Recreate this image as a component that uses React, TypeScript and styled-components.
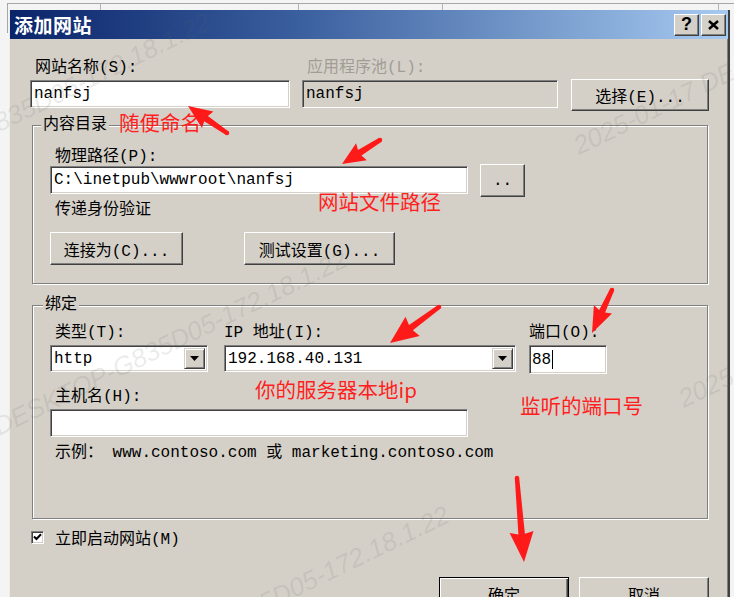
import React from "react";
import styled, { createGlobalStyle } from "styled-components";

const FACE = "#d4d0c8";
const UI_FONT = `"Liberation Mono", "Noto Sans CJK SC", monospace`;
const NOTE_FONT = `"Noto Sans CJK SC", "Noto Sans", sans-serif`;

const GlobalStyle = createGlobalStyle`
  html, body { margin: 0; padding: 0; }
  body { background: #f4f4f4; font-family: ${UI_FONT}; }
`;

const Page = styled.div`
  position: relative;
  width: 734px;
  height: 597px;
  overflow: hidden;
  background: #f4f4f4;
`;

/* list view header of the window behind the dialog */
const BackHeader = styled.div`
  position: absolute;
  left: 7px;
  top: 3px;
  width: 727px;
  height: 29px;
  border-top: 1px solid #a6a6a6;
  border-left: 1px solid #a6a6a6;
  display: flex;
`;

const BackCell = styled.div<{ $w: number }>`
  width: ${(p) => p.$w}px;
  height: 6px;
  border-right: 1px solid #b4b4b4;
  flex: none;
`;

const Dialog = styled.div`
  position: absolute;
  left: 9px;
  top: 10px;
  width: 721px;
  height: 640px;
  box-sizing: border-box;
  background: ${FACE};
  border-left: 1px solid #eeece6;
  border-right: 2px solid #404040;
  box-shadow: inset -1px 0 0 #808080;
  display: flex;
  flex-direction: column;
`;

const TitleBar = styled.div`
  height: 29px;
  flex: none;
  background: linear-gradient(90deg, #0a246a 0%, #3a5f9e 40%, #a6caf0 100%);
  display: flex;
  align-items: center;
  padding: 0 2px 0 4px;
`;

const TitleText = styled.div`
  flex: 1;
  color: #fff;
  font: bold 19px ${NOTE_FONT};
  line-height: 29px;
  letter-spacing: 0.5px;
`;

const TitleButtons = styled.div`
  display: flex;
  gap: 2px;
`;

const CaptionButton = styled.div`
  box-sizing: border-box;
  width: 25px;
  height: 22px;
  background: ${FACE};
  border: 1px solid;
  border-color: #fff #404040 #404040 #fff;
  box-shadow: inset -1px -1px 0 #808080;
  display: flex;
  align-items: center;
  justify-content: center;
  font: bold 18px "Liberation Sans", sans-serif;
  color: #000;
`;

const Body = styled.div`
  padding: 19px 19px 0 20px;
  display: flex;
  flex-direction: column;
`;

const TopGrid = styled.div`
  display: grid;
  grid-template-columns: 260px 256px 1fr;
  column-gap: 12px;
  row-gap: 2px;
`;

const Label = styled.div<{ $indent?: number; $disabled?: boolean; $mt?: number }>`
  font-size: 16px;
  line-height: 20px;
  height: 20px;
  white-space: nowrap;
  color: ${(p) => (p.$disabled ? "#a19d96" : "#000")};
  padding-left: ${(p) => p.$indent ?? 0}px;
  margin-top: ${(p) => p.$mt ?? 0}px;
`;

const Field = styled.div<{ $w: number; $h?: number; $disabled?: boolean; $mt?: number }>`
  box-sizing: border-box;
  width: ${(p) => p.$w}px;
  height: ${(p) => p.$h ?? 28}px;
  margin-top: ${(p) => p.$mt ?? 0}px;
  background: ${(p) => (p.$disabled ? FACE : "#fff")};
  border: 1px solid;
  border-color: #808080 #fff #fff #808080;
  box-shadow: inset 1px 1px 0 #404040, inset -1px -1px 0 ${FACE};
  display: flex;
  align-items: center;
  padding: 0 2px 0 2px;
  font-size: 16px;
  color: #000;
  white-space: nowrap;
  overflow: hidden;
`;

const FieldText = styled.span`
  flex: 1;
  padding-left: 1px;
`;

const Caret = styled.span`
  width: 1px;
  height: 19px;
  background: #000;
  margin-left: 1px;
`;

const DropButton = styled.div`
  box-sizing: border-box;
  width: 21px;
  height: 21px;
  flex: none;
  background: ${FACE};
  border: 1px solid;
  border-color: ${FACE} #404040 #404040 ${FACE};
  box-shadow: inset 1px 1px 0 #fff, inset -1px -1px 0 #808080;
  display: flex;
  align-items: center;
  justify-content: center;
`;

const Button = styled.div<{ $w: number; $h?: number; $default?: boolean; $mt?: number }>`
  box-sizing: border-box;
  width: ${(p) => p.$w}px;
  height: ${(p) => p.$h ?? 33}px;
  margin-top: ${(p) => p.$mt ?? 0}px;
  flex: none;
  background: ${FACE};
  border: 1px solid;
  border-color: ${(p) => (p.$default ? "#000" : "#fff #404040 #404040 #fff")};
  box-shadow: ${(p) =>
    p.$default
      ? "inset 1px 1px 0 #fff, inset -1px -1px 0 #404040, inset -2px -2px 0 #808080"
      : `inset -1px -1px 0 #808080, inset 1px 1px 0 ${FACE}`};
  display: flex;
  align-items: center;
  justify-content: center;
  font-size: 16px;
  color: #000;
  white-space: nowrap;
`;

const SelectButton = styled(Button)`
  justify-self: end;
  align-self: start;
`;

const Group = styled.div<{ $mt: number; $pb: number }>`
  margin: ${(p) => p.$mt}px 1px 0 2px;
  border: 1px solid #808080;
  box-shadow: inset 1px 1px 0 #fff, 1px 1px 0 #fff;
  padding: 0 17px ${(p) => p.$pb}px 17px;
  display: flex;
  flex-direction: column;
  align-items: flex-start;
`;

const Legend = styled.div<{ $ml: number }>`
  margin: -11px 0 0 ${(p) => p.$ml}px;
  padding: 0 2px;
  background: ${FACE};
  font-size: 16px;
  line-height: 20px;
  height: 20px;
  color: #000;
`;

const Row = styled.div<{ $gap: number; $mt?: number }>`
  display: flex;
  align-items: flex-start;
  gap: ${(p) => p.$gap}px;
  margin-top: ${(p) => p.$mt ?? 0}px;
`;

const BindGrid = styled.div`
  display: grid;
  grid-template-columns: 174px 305px 78px;
  row-gap: 2px;
  margin-top: 8px;
  align-items: start;
`;

const CheckRow = styled.div`
  display: flex;
  align-items: center;
  gap: 11px;
  margin: 8px 0 0 1px;
  height: 20px;
  font-size: 16px;
`;

const CheckBox = styled.div`
  box-sizing: border-box;
  width: 13px;
  height: 13px;
  background: #fff;
  border: 1px solid;
  border-color: #808080 #fff #fff #808080;
  box-shadow: inset 1px 1px 0 #404040, inset -1px -1px 0 ${FACE};
  display: flex;
  align-items: center;
  justify-content: center;
`;

const DialogButtons = styled.div`
  display: flex;
  justify-content: flex-end;
  gap: 10px;
  margin-top: 30px;
`;

/* ---------- overlay: watermarks, annotations, arrows ---------- */

const Overlay = styled.div`
  position: absolute;
  inset: 0;
  pointer-events: none;
`;

const Watermark = styled.span<{ $x: number; $y: number }>`
  position: absolute;
  left: ${(p) => p.$x}px;
  top: ${(p) => p.$y - 15}px;
  font: italic 26px "Liberation Sans", sans-serif;
  line-height: 30px;
  color: rgba(100, 100, 100, 0.13);
  white-space: nowrap;
  transform-origin: 0 50%;
  transform: rotate(-26deg);
`;

const Note = styled.span<{ $x: number; $y: number }>`
  position: absolute;
  left: ${(p) => p.$x}px;
  top: ${(p) => p.$y}px;
  font: 20.5px ${NOTE_FONT};
  line-height: 24px;
  color: #ff1f1f;
  white-space: nowrap;
`;

const ArrowLayer = styled.svg`
  position: absolute;
  left: 0;
  top: 0;
`;

type Arrow = { x1: number; y1: number; x2: number; y2: number; L: number; H: number };

const arrows: Arrow[] = [
  { x1: 227, y1: 133, x2: 188, y2: 106, L: 22, H: 10 },
  { x1: 380, y1: 140, x2: 342, y2: 164, L: 21, H: 10 },
  { x1: 439, y1: 307, x2: 390, y2: 343, L: 26, H: 12 },
  { x1: 612, y1: 290, x2: 592, y2: 333, L: 24, H: 10 },
  { x1: 517, y1: 478, x2: 524, y2: 562, L: 28, H: 12 },
];

function arrowPoints(a: Arrow, w0 = 4.5, w1 = 6.5) {
  const dx = a.x2 - a.x1;
  const dy = a.y2 - a.y1;
  const len = Math.hypot(dx, dy);
  const ux = dx / len;
  const uy = dy / len;
  const nx = -uy;
  const ny = ux;
  const bx = a.x2 - ux * a.L;
  const by = a.y2 - uy * a.L;
  const pts = [
    [a.x1 + (nx * w0) / 2, a.y1 + (ny * w0) / 2],
    [bx + (nx * w1) / 2, by + (ny * w1) / 2],
    [bx + nx * a.H - ux * 2, by + ny * a.H - uy * 2],
    [a.x2, a.y2],
    [bx - nx * a.H - ux * 2, by - ny * a.H - uy * 2],
    [bx - (nx * w1) / 2, by - (ny * w1) / 2],
    [a.x1 - (nx * w0) / 2, a.y1 - (ny * w0) / 2],
  ];
  return pts.map((p) => p.map((v) => v.toFixed(1)).join(",")).join(" ");
}

const watermarks = [
  { x: -142, y: 191, t: "DESKTOP-G835D05-172.18.1.22" },
  { x: -5, y: 428, t: "DESKTOP-G835D05-172.18.1.22" },
  { x: 575, y: 147, t: "2025-01-17 DESKTOP-G835D05" },
  { x: 97, y: 684, t: "DESKTOP-G835D05-172.18.1.22" },
  { x: 680, y: 400, t: "2025-01-17 DESKTOP" },
];

const DownTriangle = () => (
  <svg width="9" height="5" viewBox="0 0 9 5">
    <path d="M0 0 H9 L4.5 5 Z" fill="#000" />
  </svg>
);

const CloseGlyph = () => (
  <svg width="11" height="10" viewBox="0 0 11 10">
    <path d="M1 1 L10 9 M10 1 L1 9" stroke="#000" strokeWidth="2.4" fill="none" />
  </svg>
);

const CheckGlyph = () => (
  <svg width="9" height="8" viewBox="0 0 9 8">
    <path d="M1 3.5 L3.5 6 L8 1.2" stroke="#000" strokeWidth="2" fill="none" />
  </svg>
);

export default function App() {
  return (
    <>
      <GlobalStyle />
      <Page>
        <BackHeader>
          <BackCell $w={92} />
          <BackCell $w={197} />
          <BackCell $w={143} />
          <BackCell $w={275} />
        </BackHeader>

        <Dialog>
          <TitleBar>
            <TitleText>添加网站</TitleText>
            <TitleButtons>
              <CaptionButton>?</CaptionButton>
              <CaptionButton>
                <CloseGlyph />
              </CaptionButton>
            </TitleButtons>
          </TitleBar>

          <Body>
            <TopGrid>
              <Label $indent={5}>网站名称(S):</Label>
              <Label $indent={5} $disabled>
                应用程序池(L):
              </Label>
              <div />
              <Field $w={260}>
                <FieldText>nanfsj</FieldText>
              </Field>
              <Field $w={256} $disabled>
                <FieldText>nanfsj</FieldText>
              </Field>
              <SelectButton $w={138} $h={32} $mt={-1}>
                选择(E)...
              </SelectButton>
            </TopGrid>

            <Group $mt={14} $pb={18}>
              <Legend $ml={-9}>内容目录</Legend>
              <Label $indent={5} $mt={12}>
                物理路径(P):
              </Label>
              <Row $gap={12} $mt={-1}>
                <Field $w={418}>
                  <FieldText>C:\inetpub\wwwroot\nanfsj</FieldText>
                </Field>
                <Button $w={45} $mt={-2}>
                  ..
                </Button>
              </Row>
              <Label $indent={5} $mt={3}>
                传递身份验证
              </Label>
              <Row $gap={61} $mt={12}>
                <Button $w={133}>连接为(C)...</Button>
                <Button $w={151}>测试设置(G)...</Button>
              </Row>
            </Group>

            <Group $mt={21} $pb={55}>
              <Legend $ml={-7}>绑定</Legend>
              <BindGrid>
                <Label $indent={5}>类型(T):</Label>
                <Label>IP 地址(I):</Label>
                <Label>端口(O):</Label>
                <Field $w={158} $h={27}>
                  <FieldText>http</FieldText>
                  <DropButton>
                    <DownTriangle />
                  </DropButton>
                </Field>
                <Field $w={292} $h={27}>
                  <FieldText>192.168.40.131</FieldText>
                  <DropButton>
                    <DownTriangle />
                  </DropButton>
                </Field>
                <Field $w={78} $h={29}>
                  <span>88</span>
                  <Caret />
                </Field>
              </BindGrid>
              <Label $indent={5} $mt={13}>
                主机名(H):
              </Label>
              <Field $w={418} $mt={2} />
              <Label $indent={5} $mt={6}>
                示例： www.contoso.com 或 marketing.contoso.com
              </Label>
            </Group>

            <CheckRow>
              <CheckBox>
                <CheckGlyph />
              </CheckBox>
              <span>立即启动网站(M)</span>
            </CheckRow>

            <DialogButtons>
              <Button $w={130} $default>
                确定
              </Button>
              <Button $w={130}>取消</Button>
            </DialogButtons>
          </Body>
        </Dialog>

        <Overlay>
          {watermarks.map((w, i) => (
            <Watermark key={i} $x={w.x} $y={w.y}>
              {w.t}
            </Watermark>
          ))}
          <Note $x={119} $y={110}>随便命名</Note>
          <Note $x={318} $y={189}>网站文件路径</Note>
          <Note $x={255} $y={377}>你的服务器本地ip</Note>
          <Note $x={520} $y={393}>监听的端口号</Note>
          <ArrowLayer width="734" height="597" viewBox="0 0 734 597">
            {arrows.map((a, i) => (
              <g key={i} fill="#ff1a1a">
                <polygon points={arrowPoints(a)} />
                <circle cx={a.x1} cy={a.y1} r={2.25} />
              </g>
            ))}
          </ArrowLayer>
        </Overlay>
      </Page>
    </>
  );
}
